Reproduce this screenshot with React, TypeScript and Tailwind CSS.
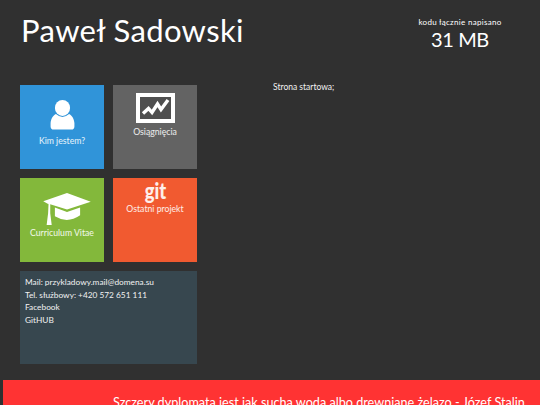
export default function App() {
  const tile = "w-[84px] h-[84px] flex flex-col items-center text-white/90 text-[8.7px] leading-[12px]";
  return (
    <div className="w-[540px] h-[405px] overflow-hidden bg-[#303030] text-white flex flex-col font-['Lato',sans-serif]">
      <header className="h-[85px] shrink-0 flex justify-between">
        <h1 className="ml-[21px] mt-[11px] text-[31px] leading-[38px] tracking-[0.35px] font-normal font-['Lato',sans-serif]">Paweł Sadowski</h1>
        <div className="w-[84px] mr-[38px] mt-[17px] flex flex-col items-center">
          <span className="text-[8px] leading-[10px] whitespace-nowrap tracking-[0.3px]">kodu łącznie napisano</span>
          <span className="text-[20px] leading-[24px] tracking-[-0.4px]">31 MB</span>
        </div>
      </header>
      <div className="h-[295px] shrink-0 flex">
        <div className="ml-[20px] w-[177px] flex flex-col gap-[9px]">
          <div className="grid grid-cols-[84px_84px] gap-[9px]">
            <div className={`${tile} bg-[#3094d9]`}>
              <svg viewBox="0 0 28 34" className="w-[27px] h-[30px] mt-[15px]" fill="#fff">
                <ellipse cx="14" cy="9" rx="8.6" ry="9" />
                <path d="M6.5 16C2.5 18 1 22 0.5 26V30Q0.5 33.5 4 33.5H24Q27.5 33.5 27.5 30V26C27 22 25.5 18 21.5 16Q14 22.5 6.5 16Z" />
              </svg>
              <span className="mt-[5px]">Kim jestem?</span>
            </div>
            <div className={`${tile} bg-[#636363]`}>
              <svg viewBox="0 0 39 30" className="w-[39px] h-[30px] mt-[8px]">
                <path fill="#fff" d="M0 0H39V30H0Z" />
                <path fill="#4f4f4f" d="M4 4H35V26H4Z" />
                <path d="M7 20.5L12.5 15.5L16 19.5L21.5 11L25 16.5L32 7" fill="none" stroke="#fff" strokeWidth="3.4" />
              </svg>
              <span className="mt-[3px]">Osiągnięcia</span>
            </div>
            <div className={`${tile} bg-[#83b83b]`}>
              <svg viewBox="0 0 50 33" className="w-[49px] h-[32px] mt-[15px] ml-[11px]" fill="#fff">
                <path d="M24.5 0L49 9L24.5 17L5.5 11L5.5 11.5L0 8.5Z" />
                <path d="M12 15L24.5 19.5L38 15V23Q25 32 12 24Z" />
                <path d="M5.5 10H7.2V21L8.7 33H3.5L5 21Z" />
              </svg>
              <span className="mt-[2px]">Curriculum Vitae</span>
            </div>
            <div className={`${tile} bg-[#f15a30]`}>
              <span className="mt-[2px] text-[23px] leading-[21px] font-black scale-x-[0.8]">git</span>
              <span className="mt-[2px]">Ostatni projekt</span>
            </div>
          </div>
          <div className="h-[93px] bg-[#37474f] pl-[5px] pt-[5px] text-[8.3px] leading-[12.6px] text-[#f2f2f2]">
            <p>Mail: przykladowy.mail@domena.su</p>
            <p>Tel. służbowy: +420 572 651 111</p>
            <p>Facebook</p>
            <p>GitHUB</p>
          </div>
        </div>
        <p className="ml-[76px] text-[8.5px] leading-[12px] mt-[-4px] h-[12px] text-[#f2f2f2]">Strona startowa;</p>
      </div>
      <footer className="ml-[3px] grow bg-[#ff3333] pl-[110px] pt-[15px] text-[12.65px] leading-[16px] whitespace-nowrap overflow-hidden">
        Szczery dyplomata jest jak sucha woda albo drewniane żelazo - Józef Stalin
      </footer>
    </div>
  );
}
